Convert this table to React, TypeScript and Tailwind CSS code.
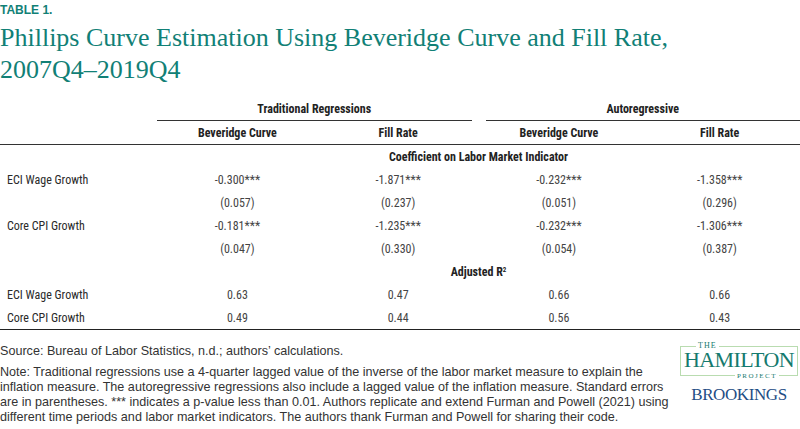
import React from 'react';

const rows = [
  { label: 'ECI Wage Growth', values: ['-0.300***', '-1.871***', '-0.232***', '-1.358***'] },
  { label: '', values: ['(0.057)', '(0.237)', '(0.051)', '(0.296)'] },
  { label: 'Core CPI Growth', values: ['-0.181***', '-1.235***', '-0.232***', '-1.306***'] },
  { label: '', values: ['(0.047)', '(0.330)', '(0.054)', '(0.387)'] },
];

const r2Rows = [
  { label: 'ECI Wage Growth', values: ['0.63', '0.47', '0.66', '0.66'] },
  { label: 'Core CPI Growth', values: ['0.49', '0.44', '0.56', '0.43'] },
];

const narrow = "font-['Liberation_Sans_Narrow','Roboto_Condensed','Liberation_Sans',sans-serif]";

const DataRow = ({ label, values }: { label: string; values: string[] }) => (
  <div className="grid grid-cols-[157px_repeat(4,1fr)] h-[23px] items-center text-[12px] text-[#444]">
    <div className="pl-[7px] text-[#2a2a2a]">{label}</div>
    {values.map((v, i) => (
      <div key={i} className="text-center">{v}</div>
    ))}
  </div>
);

const Logo = () => (
  <div className="flex flex-col items-center w-[120px] mt-[16px] mr-[1px]">
    <div className="relative w-[118px] h-[30px] border border-[#b9dcb0] flex items-start justify-center">
      <span className="absolute -top-[6px] left-[15px] bg-white px-[2px] text-[8px] leading-[10px] text-[#157a6e] font-['Liberation_Serif',serif] tracking-[1px]">THE</span>
      <span className="text-[22px] leading-[20px] text-[#157a6e] font-['Liberation_Serif',serif] tracking-[-0.6px] mt-[3px]">HAMILTON</span>
      <span className="absolute -bottom-[6px] right-[18px] bg-white px-[2px] text-[7px] leading-[10px] text-[#157a6e] font-['Liberation_Serif',serif] tracking-[1.5px]">PROJECT</span>
    </div>
    <div className="mt-[9px] text-[17px] leading-[19px] text-[#1f4e85] font-['Liberation_Serif',serif] tracking-[-0.4px]">BROOKINGS</div>
  </div>
);

export default function App() {
  return (
    <div className="w-[800px] h-[429px] bg-white overflow-hidden font-['Liberation_Sans',sans-serif]">
      {/* Heading */}
      <div className="pt-[3px] text-[12px] leading-[14px] font-bold text-[#118076]">TABLE 1.</div>
      <h1 className="mt-[5px] text-[26px] leading-[32px] text-[#118076] font-['Liberation_Serif',serif]">
        Phillips Curve Estimation Using Beveridge Curve and Fill Rate,
        <br />
        2007Q4–2019Q4
      </h1>

      {/* Table */}
      <div className={`mt-[14px] ${narrow}`}>
        <div className="grid grid-cols-[157px_repeat(4,1fr)] h-[21px] text-[12px] font-bold text-[#222]">
          <div />
          <div className="col-span-2 mr-[7px] border-b border-[#333] text-center leading-[19px]">Traditional Regressions</div>
          <div className="col-span-2 ml-[7px] border-b border-[#333] text-center leading-[19px]">Autoregressive</div>
        </div>
        <div className="grid grid-cols-[157px_repeat(4,1fr)] h-[24px] items-center border-b border-[#333] text-[12px] font-bold text-[#222]">
          <div />
          <div className="text-center">Beveridge Curve</div>
          <div className="text-center">Fill Rate</div>
          <div className="text-center">Beveridge Curve</div>
          <div className="text-center">Fill Rate</div>
        </div>
        <div className="grid grid-cols-[157px_1fr] h-[23px] items-center text-[12px] font-bold text-[#222]">
          <div />
          <div className="text-center">Coefficient on Labor Market Indicator</div>
        </div>
        {rows.map((r, i) => (
          <DataRow key={i} {...r} />
        ))}
        <div className="grid grid-cols-[157px_1fr] h-[23px] items-center text-[12px] font-bold text-[#222]">
          <div />
          <div className="text-center">
            Adjusted R<span className="relative -top-[4px] text-[7px]">2</span>
          </div>
        </div>
        <div className="border-b-[1.5px] border-[#222]">
          {r2Rows.map((r, i) => (
            <DataRow key={i} {...r} />
          ))}
        </div>
      </div>

      {/* Footer */}
      <div className="flex justify-between">
        <div className="text-[12.6px] leading-[15px] text-[#333]">
          <p className="mt-[14px]">Source: Bureau of Labor Statistics, n.d.; authors’ calculations.</p>
          <p className="mt-[6px]">
            Note: Traditional regressions use a 4-quarter lagged value of the inverse of the labor market measure to explain the
            <br />
            inflation measure. The autoregressive regressions also include a lagged value of the inflation measure. Standard errors
            <br />
            are in parentheses. *** indicates a p-value less than 0.01. Authors replicate and extend Furman and Powell (2021) using
            <br />
            different time periods and labor market indicators. The authors thank Furman and Powell for sharing their code.
          </p>
        </div>
        <Logo />
      </div>
    </div>
  );
}
